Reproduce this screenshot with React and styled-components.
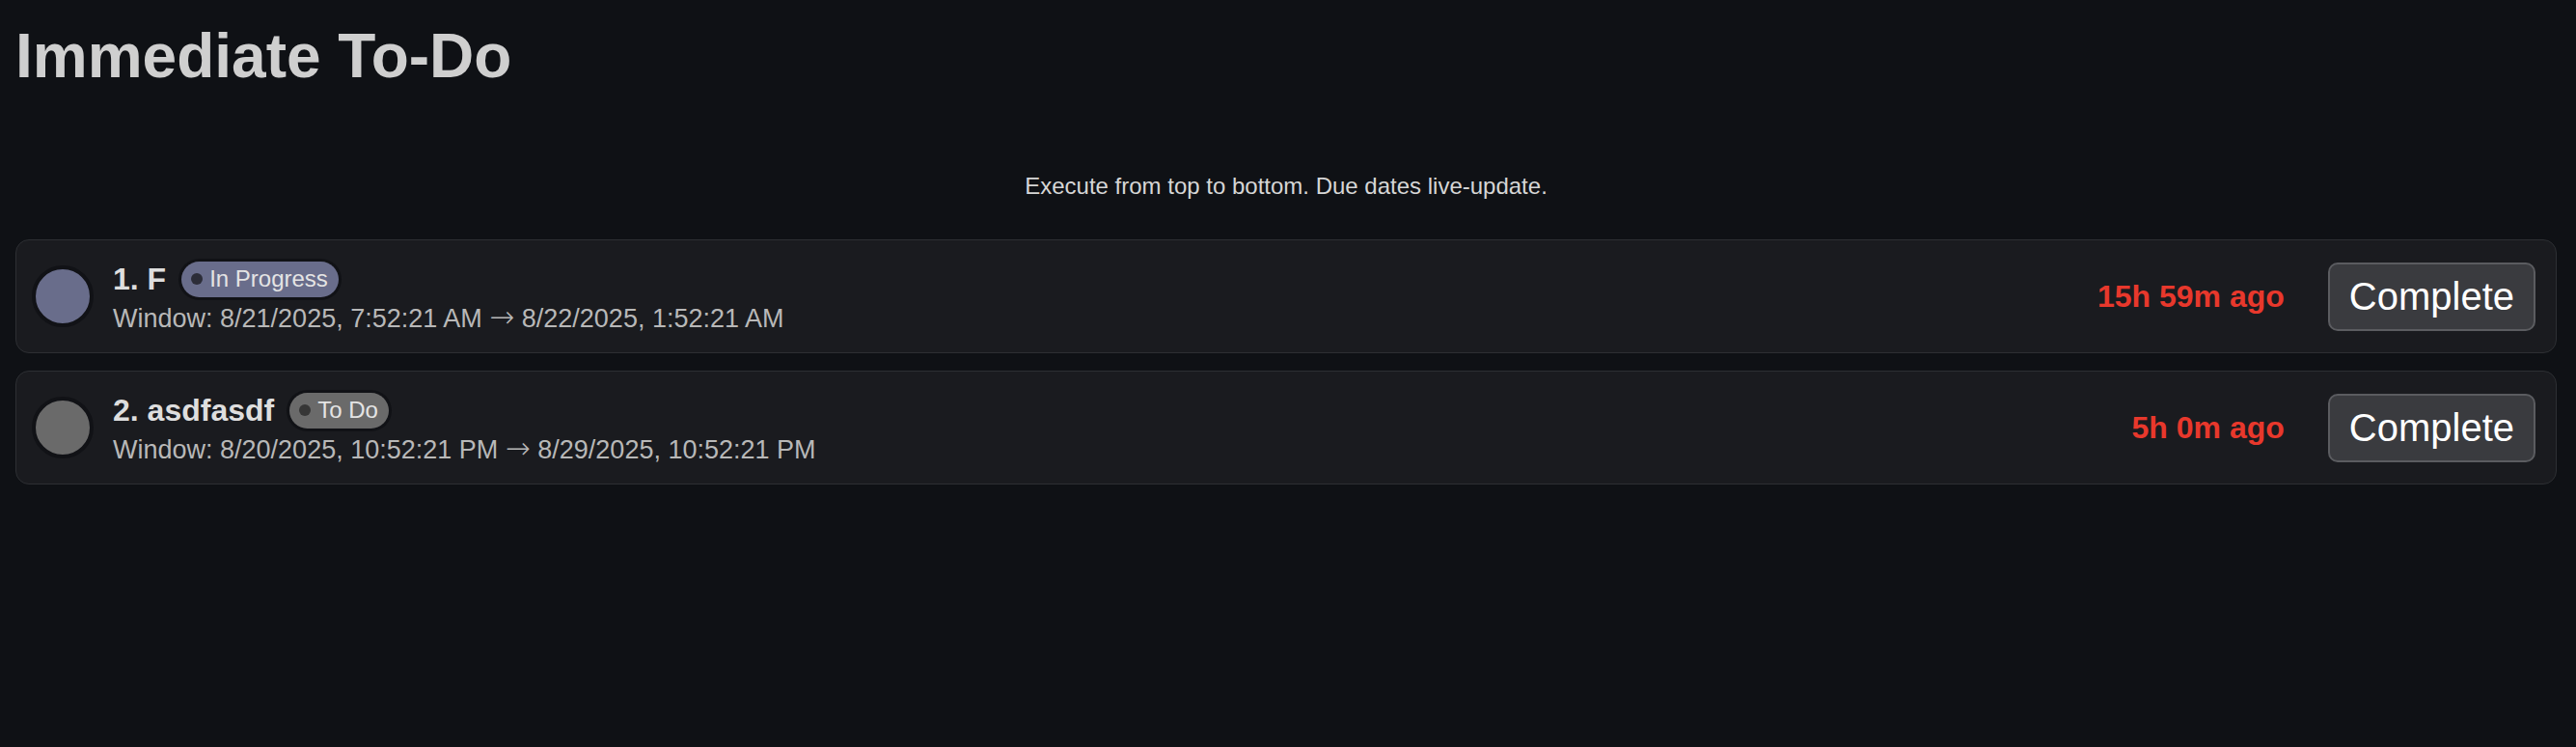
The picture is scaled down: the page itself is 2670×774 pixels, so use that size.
import styled, { createGlobalStyle } from "styled-components";

const tasks = [
  {
    id: 1,
    name: "F",
    status: "progress",
    label: "In Progress",
    start: "8/21/2025, 7:52:21 AM",
    end: "8/22/2025, 1:52:21 AM",
    due: "15h 59m ago",
  },
  {
    id: 2,
    name: "asdfasdf",
    status: "todo",
    label: "To Do",
    start: "8/20/2025, 10:52:21 PM",
    end: "8/29/2025, 10:52:21 PM",
    due: "5h 0m ago",
  },
];

const statusColors = {
  progress: { fill: "#696d8b", dot: "#2c2d38" },
  todo: { fill: "#6a6a6a", dot: "#363636" },
};

const GlobalStyle = createGlobalStyle`
  html, body {
    margin: 0;
    padding: 0;
    background: #0f1115;
  }
  body {
    font-family: "Liberation Sans", Arial, sans-serif;
    color: #d4d4d4;
  }
`;

const App = () => {
  return (
    <>
      <GlobalStyle />
      <Page>
        <Heading>Immediate To-Do</Heading>
        <Hint>Execute from top to bottom. Due dates live-update.</Hint>
        <List>
          {tasks.map((task, i) => (
            <Card key={task.id}>
              <StatusCircle $status={task.status} />
              <Info>
                <TitleRow>
                  <TaskName>
                    {i + 1}. {task.name}
                  </TaskName>
                  <Badge $status={task.status}>
                    <BadgeDot $status={task.status} />
                    {task.label}
                  </Badge>
                </TitleRow>
                <WindowText>
                  Window: {task.start} <Arrow>→</Arrow> {task.end}
                </WindowText>
              </Info>
              <Due>{task.due}</Due>
              <CompleteButton>Complete</CompleteButton>
            </Card>
          ))}
        </List>
      </Page>
    </>
  );
};

export default App;

const Page = styled.div`
  padding: 0 20px 0 16px;
  min-height: 774px;
  box-sizing: border-box;
`;

const Heading = styled.h1`
  margin: 21px 0 0;
  font-size: 64px;
  line-height: 74px;
  font-weight: bold;
  color: #cfcfcf;
`;

const Hint = styled.p`
  margin: 84px 0 0;
  font-size: 24px;
  line-height: 27px;
  text-align: center;
  color: #d6d6d6;
`;

const List = styled.div`
  margin-top: 42px;
  display: flex;
  flex-direction: column;
  gap: 18px;
`;

const Card = styled.div`
  display: flex;
  align-items: center;
  height: 118px;
  box-sizing: border-box;
  padding: 0 21px 0 16px;
  background: #1a1b1f;
  border: 1.5px solid #2d2f33;
  border-radius: 14px;
`;

const StatusCircle = styled.div`
  flex: none;
  width: 56px;
  height: 56px;
  border-radius: 50%;
  background: ${({ $status }) => statusColors[$status].fill};
  border: 4px solid #111216;
`;

const Info = styled.div`
  flex: 1;
  margin-left: 20px;
  display: flex;
  flex-direction: column;
  gap: 8px;
`;

const TitleRow = styled.div`
  display: flex;
  align-items: center;
  gap: 16px;
  height: 37px;
`;

const TaskName = styled.span`
  font-size: 32px;
  font-weight: bold;
  color: #dedede;
`;

const Badge = styled.span`
  display: inline-flex;
  align-items: center;
  gap: 7px;
  height: 37px;
  padding: 0 11px 0 10px;
  border-radius: 19px;
  background: ${({ $status }) => statusColors[$status].fill};
  box-shadow: 0 0 0 3px #111216;
  font-size: 24px;
  color: #e4e4e4;
`;

const BadgeDot = styled.span`
  width: 12px;
  height: 12px;
  border-radius: 50%;
  background: ${({ $status }) => statusColors[$status].dot};
`;

const WindowText = styled.div`
  height: 28px;
  font-size: 27px;
  line-height: 28px;
  color: #b8b8b8;
`;

const Arrow = styled.span`
  font-family: "DejaVu Sans", sans-serif;
  font-size: 31px;
  font-weight: 300;
  line-height: 0;
`;

const Due = styled.div`
  font-size: 32px;
  font-weight: bold;
  color: #e8382c;
  margin-right: 45px;
`;

const CompleteButton = styled.button`
  flex: none;
  padding: 10px 20px;
  font-family: "Liberation Sans", Arial, sans-serif;
  font-size: 40px;
  line-height: 47px;
  color: #ffffff;
  background: #3a3b3f;
  border: 2px solid #5b5c60;
  border-radius: 10px;
  cursor: pointer;
`;
